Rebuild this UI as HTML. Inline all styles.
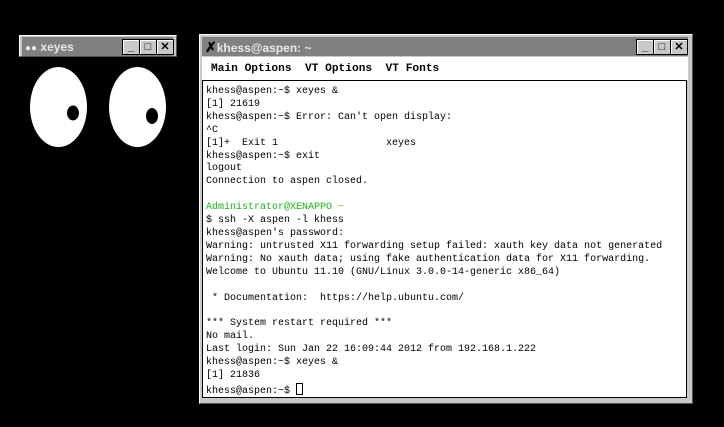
<!DOCTYPE html>
<html><head><style>
body{margin:0;width:724px;height:427px;background:#000;position:relative;overflow:hidden;font-family:"Liberation Sans",sans-serif}
.frame{position:absolute;background:#c8c8c8;border-top:1px solid #fff;border-left:1px solid #fff;border-right:1px solid #555;border-bottom:1px solid #555}
.title{position:absolute;background:#808080;color:#e8e8e8;font-weight:bold;font-size:12px;line-height:20px}
.btn{position:absolute;top:2px;width:16px;height:14px;background:#c8c8c8;border:1px solid #000;box-shadow:inset 1px 1px #fff;font-size:11px;line-height:14px;text-align:center;color:#000;font-weight:bold}
pre{margin:0;font-family:"Liberation Mono",monospace;font-size:10px;line-height:12.9px;color:#000}
</style></head><body>
<!-- xeyes -->
<div class="frame" style="left:19px;top:35px;width:156px;height:20px"></div>
<div class="title" style="left:22px;top:37px;width:151px;height:19px">
<span style="margin-left:3px;font-size:10px">●●</span> xeyes
<div class="btn" style="left:100px;top:2px">_</div>
<div class="btn" style="left:117px;top:2px">□</div>
<div class="btn" style="left:134px;top:2px">✕</div>
</div>
<svg style="position:absolute;left:0;top:0" width="200" height="160">
<ellipse cx="58.5" cy="107" rx="28.5" ry="40" fill="#fff"/>
<ellipse cx="73" cy="113" rx="6" ry="7.5" fill="#000"/>
<ellipse cx="137.5" cy="107" rx="28.5" ry="40" fill="#fff"/>
<ellipse cx="152" cy="116" rx="6" ry="8" fill="#000"/>
</svg>
<!-- xterm -->
<div class="frame" style="left:199px;top:34px;width:492px;height:368px"></div>
<div class="title" style="left:202px;top:37px;width:486px;height:19px">
<span style="margin-left:3px;color:#000;font-size:14px">✗</span>khess@aspen: ~
<div class="btn" style="left:434px">_</div>
<div class="btn" style="left:451px">□</div>
<div class="btn" style="left:468px">✕</div>
</div>
<div style="position:absolute;left:202px;top:57px;width:486px;height:23px;background:#fff;font-family:'Liberation Mono',monospace;font-weight:bold;font-size:11.2px;line-height:24px;padding-left:9px;box-sizing:border-box">Main Options&nbsp; VT Options&nbsp; VT Fonts</div>
<div style="position:absolute;left:202px;top:80px;width:485px;height:318px;background:#fff;border:1px solid #000;box-sizing:border-box;padding:5px 0 0 3px">
<pre>khess@aspen:~$ xeyes &amp;
[1] 21619
khess@aspen:~$ Error: Can't open display:
^C
[1]+  Exit 1                  xeyes
khess@aspen:~$ exit
logout
Connection to aspen closed.

<span style="color:#1cb01c">Administrator@XENAPPO</span> <span style="color:#b0a020">~</span>
$ ssh -X aspen -l khess
khess@aspen's password:
Warning: untrusted X11 forwarding setup failed: xauth key data not generated
Warning: No xauth data; using fake authentication data for X11 forwarding.
Welcome to Ubuntu 11.10 (GNU/Linux 3.0.0-14-generic x86_64)

 * Documentation:  https://help.ubuntu.com/

*** System restart required ***
No mail.
Last login: Sun Jan 22 16:09:44 2012 from 192.168.1.222
khess@aspen:~$ xeyes &amp;
[1] 21836
khess@aspen:~$ <span style="display:inline-block;width:5px;height:10px;border:1px solid #000;vertical-align:-2px"></span></pre>
</div>
</body></html>
